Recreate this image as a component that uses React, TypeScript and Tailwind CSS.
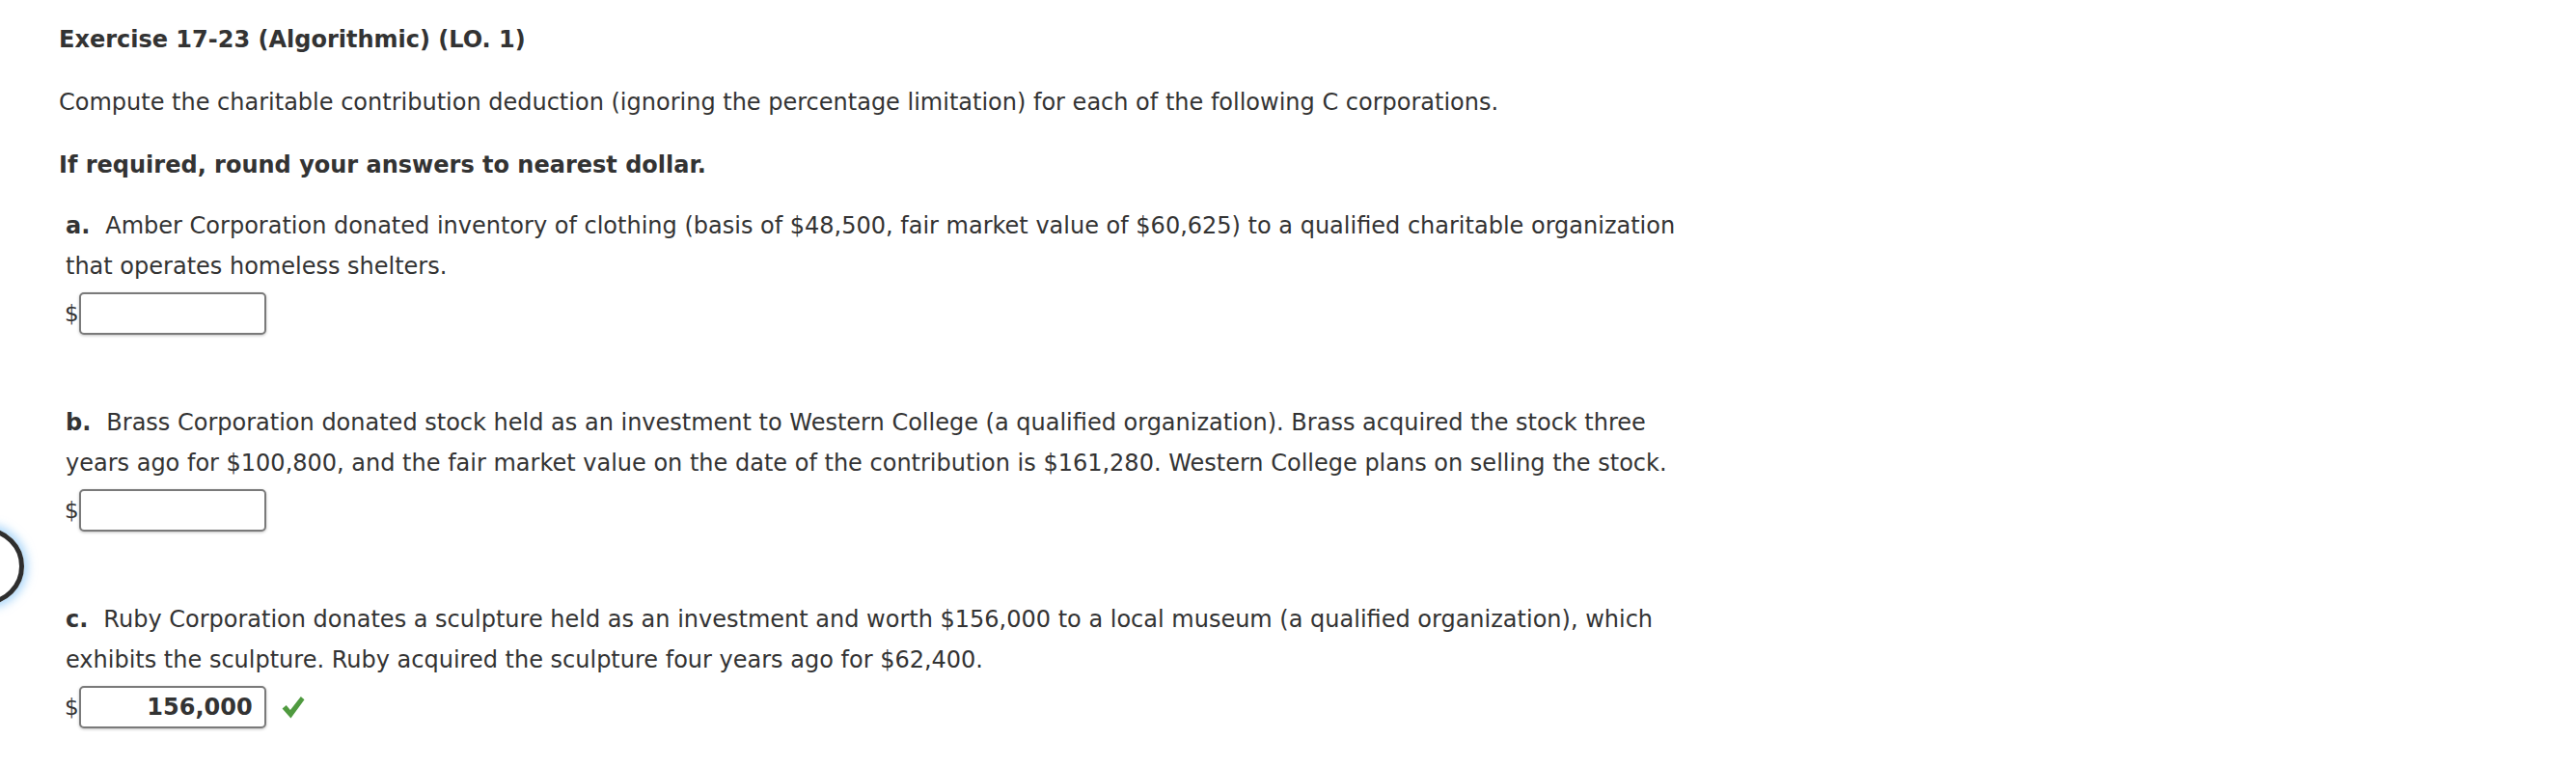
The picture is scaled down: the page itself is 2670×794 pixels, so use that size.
const font = { fontFamily: '"DejaVu Sans", Verdana, sans-serif' };

function AnswerBox({ value }: { value?: string }) {
  return (
    <div className="mt-[6px] flex items-center">
      <span className="-ml-[1px] text-[23px] leading-none">$</span>
      <div className="flex h-[44px] w-[194px] items-center justify-end rounded-[5px] border-2 border-[#7a7a7a] bg-white px-[12px] shadow-[0_1px_3px_rgba(0,0,0,0.25)]">
        {value && <span className="text-[24px] font-bold text-[#333]">{value}</span>}
      </div>
      {value && (
        <svg className="ml-[15px] h-[25px] w-[25px]" viewBox="0 0 24 24">
          <path d="M1.5 13 L5.5 9.5 L9.5 14.5 L20 1 L23.5 4 L10 22.5 Z" fill="#4f9a3f" />
        </svg>
      )}
    </div>
  );
}

function Part({ label, lines, value, top }: { label: string; lines: string[]; value?: string; top: string }) {
  return (
    <div className={`${top} pl-[7px]`}>
      <p className="text-[24px] leading-[42px]">
        <span className="mr-[16px] font-bold">{label}</span>
        {lines[0]}
        <br />
        {lines[1]}
      </p>
      <AnswerBox value={value} />
    </div>
  );
}

export default function App() {
  return (
    <div className="relative min-h-[794px] w-[2670px] overflow-hidden bg-white pt-[26px] pl-[61px] text-[#333]" style={font}>
      <h1 className="text-[24px] font-bold leading-[30px]">Exercise 17-23 (Algorithmic) (LO. 1)</h1>
      <p className="mt-[35px] text-[24px] leading-[30px]">
        Compute the charitable contribution deduction (ignoring the percentage limitation) for each of the following C corporations.
      </p>
      <p className="mt-[35px] text-[24px] font-bold leading-[30px]">If required, round your answers to nearest dollar.</p>

      <Part
        top="mt-[27px]"
        label="a."
        lines={[
          "Amber Corporation donated inventory of clothing (basis of $48,500, fair market value of $60,625) to a qualified charitable organization",
          "that operates homeless shelters.",
        ]}
      />
      <Part
        top="mt-[70px]"
        label="b."
        lines={[
          "Brass Corporation donated stock held as an investment to Western College (a qualified organization). Brass acquired the stock three",
          "years ago for $100,800, and the fair market value on the date of the contribution is $161,280. Western College plans on selling the stock.",
        ]}
      />
      <Part
        top="mt-[70px]"
        label="c."
        value="156,000"
        lines={[
          "Ruby Corporation donates a sculpture held as an investment and worth $156,000 to a local museum (a qualified organization), which",
          "exhibits the sculpture. Ruby acquired the sculpture four years ago for $62,400.",
        ]}
      />

      <div className="absolute left-[-55px] top-[547px] h-[80px] w-[80px] rounded-full border-[5px] border-[#2e2e2e] shadow-[0_0_10px_4px_rgba(120,190,245,0.6)]" />
    </div>
  );
}
